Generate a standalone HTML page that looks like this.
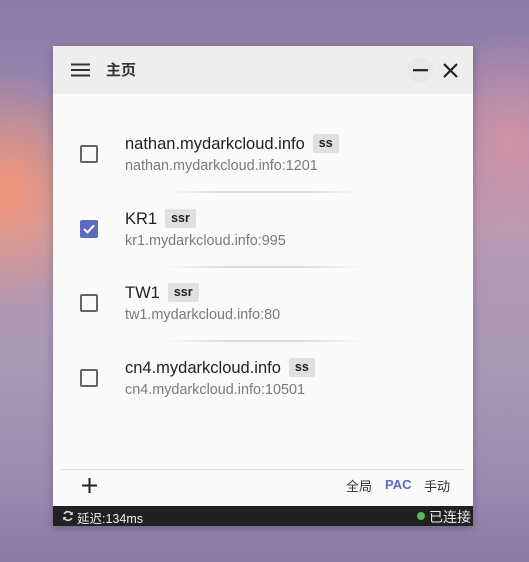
<!DOCTYPE html>
<html><head><meta charset="utf-8"><style>
*{margin:0;padding:0;box-sizing:border-box}
body{width:529px;height:562px;overflow:hidden;position:relative;font-family:"Liberation Sans","Noto Sans CJK SC",sans-serif;
background:
radial-gradient(ellipse 90px 120px at 10px 190px,rgba(255,150,110,.85),rgba(255,150,110,0) 100%),
radial-gradient(ellipse 90px 110px at 510px 140px,rgba(230,150,160,.7),rgba(230,150,160,0) 100%),
linear-gradient(180deg,#8a7aa8 0%,#9a88b0 20%,#b89ab4 40%,#a898b4 65%,#9c8cb0 85%,#8a7aa4 100%);}
.win{position:absolute;left:53px;top:46px;width:420px;height:480px;background:#fafafa;box-shadow:0 2px 8px rgba(0,0,0,.25)}
.hdr{height:48px;background:#eeeeee;position:relative}
.hdr .t{position:absolute;left:53px;top:13px;font-size:15px;font-weight:bold;color:#333}
.cb{position:absolute;left:27px;width:18px;height:18px;border:2px solid #666;border-radius:2px}
.cb.on{background:#5c6bc0;border-color:#5c6bc0}
.ti{position:absolute;left:72px;font-size:16.5px;color:#222;white-space:nowrap}
.bd{display:inline-block;background:#e0e0e0;border-radius:2px;font-size:12.5px;font-weight:bold;padding:2px 6px 3px;margin-left:8px;vertical-align:2px;color:#222}
.sub{position:absolute;left:72px;font-size:14.4px;color:#7a7a7a;white-space:nowrap}
.dv{position:absolute;left:112px;width:198px;height:2px;background:linear-gradient(90deg,rgba(0,0,0,0),rgba(0,0,0,.12) 30%,rgba(0,0,0,.12) 70%,rgba(0,0,0,0))}
.foot{position:absolute;left:8px;right:8px;top:423px;border-top:1px solid #ddd}
.st{position:absolute;left:0;top:460px;width:420px;height:20px;background:#212121;color:#eee;font-size:12.5px}
</style></head><body>
<div class="win">
<div class="hdr">
<svg style="position:absolute;left:18px;top:17px" width="19" height="14"><path d="M0 1.5H19M0 7H19M0 12.5H19" stroke="#333" stroke-width="2"/></svg>
<div class="t">主页</div>
<div style="position:absolute;left:354px;top:11px;width:26px;height:26px;border-radius:50%;background:#e8e8e8"></div>
<svg style="position:absolute;left:360px;top:23px" width="15" height="3"><path d="M0 1.2H15" stroke="#222" stroke-width="2.2"/></svg>
<svg style="position:absolute;left:390px;top:17px" width="15" height="15"><path d="M1 1L14 14M14 1L1 14" stroke="#222" stroke-width="2.2"/></svg>
</div>
<div class="cb" style="top:99px"></div>
<div class="ti" style="top:88px">nathan.mydarkcloud.info<span class="bd">ss</span></div>
<div class="sub" style="top:112px">nathan.mydarkcloud.info:1201</div>
<div class="dv" style="top:145px"></div>
<div class="cb on" style="top:174px"><svg width="14" height="14" style="position:absolute;left:0;top:0"><path d="M2 7L5.5 10.3L12 3.3" stroke="#fff" stroke-width="2" fill="none"/></svg></div>
<div class="ti" style="top:163px">KR1<span class="bd">ssr</span></div>
<div class="sub" style="top:187px">kr1.mydarkcloud.info:995</div>
<div class="dv" style="top:220px"></div>
<div class="cb" style="top:248px"></div>
<div class="ti" style="top:237px">TW1<span class="bd">ssr</span></div>
<div class="sub" style="top:261px">tw1.mydarkcloud.info:80</div>
<div class="dv" style="top:294px"></div>
<div class="cb" style="top:323px"></div>
<div class="ti" style="top:312px">cn4.mydarkcloud.info<span class="bd">ss</span></div>
<div class="sub" style="top:336px">cn4.mydarkcloud.info:10501</div>
<div class="foot"></div>
<svg style="position:absolute;left:29px;top:432px" width="15" height="15"><path d="M7.5 0V15M0 7.5H15" stroke="#222" stroke-width="2"/></svg>
<div style="position:absolute;left:293px;top:430px;font-size:13px;color:#333">全局</div>
<div style="position:absolute;left:332px;top:431px;font-size:13px;color:#5c6bc0;font-weight:bold">PAC</div>
<div style="position:absolute;left:371px;top:430px;font-size:13px;color:#333">手动</div>
<div class="st">
<svg style="position:absolute;left:9px;top:4px" width="12" height="12" viewBox="0 0 12 12"><path d="M10 4.5A4.3 4.3 0 0 0 2.2 4M2 7.5A4.3 4.3 0 0 0 9.8 8" stroke="#ddd" stroke-width="1.6" fill="none"/><path d="M10.8 1.5V5H7.3z M1.2 10.5V7H4.7z" fill="#ddd"/></svg>
<span style="position:absolute;left:24px;top:2px">延迟:134ms</span>
<span style="position:absolute;left:364px;top:6px;width:8px;height:8px;border-radius:50%;background:#5cb85c"></span>
<span style="position:absolute;left:376px;top:1px;font-size:14px">已连接</span>
</div>
</div>
</body></html>
